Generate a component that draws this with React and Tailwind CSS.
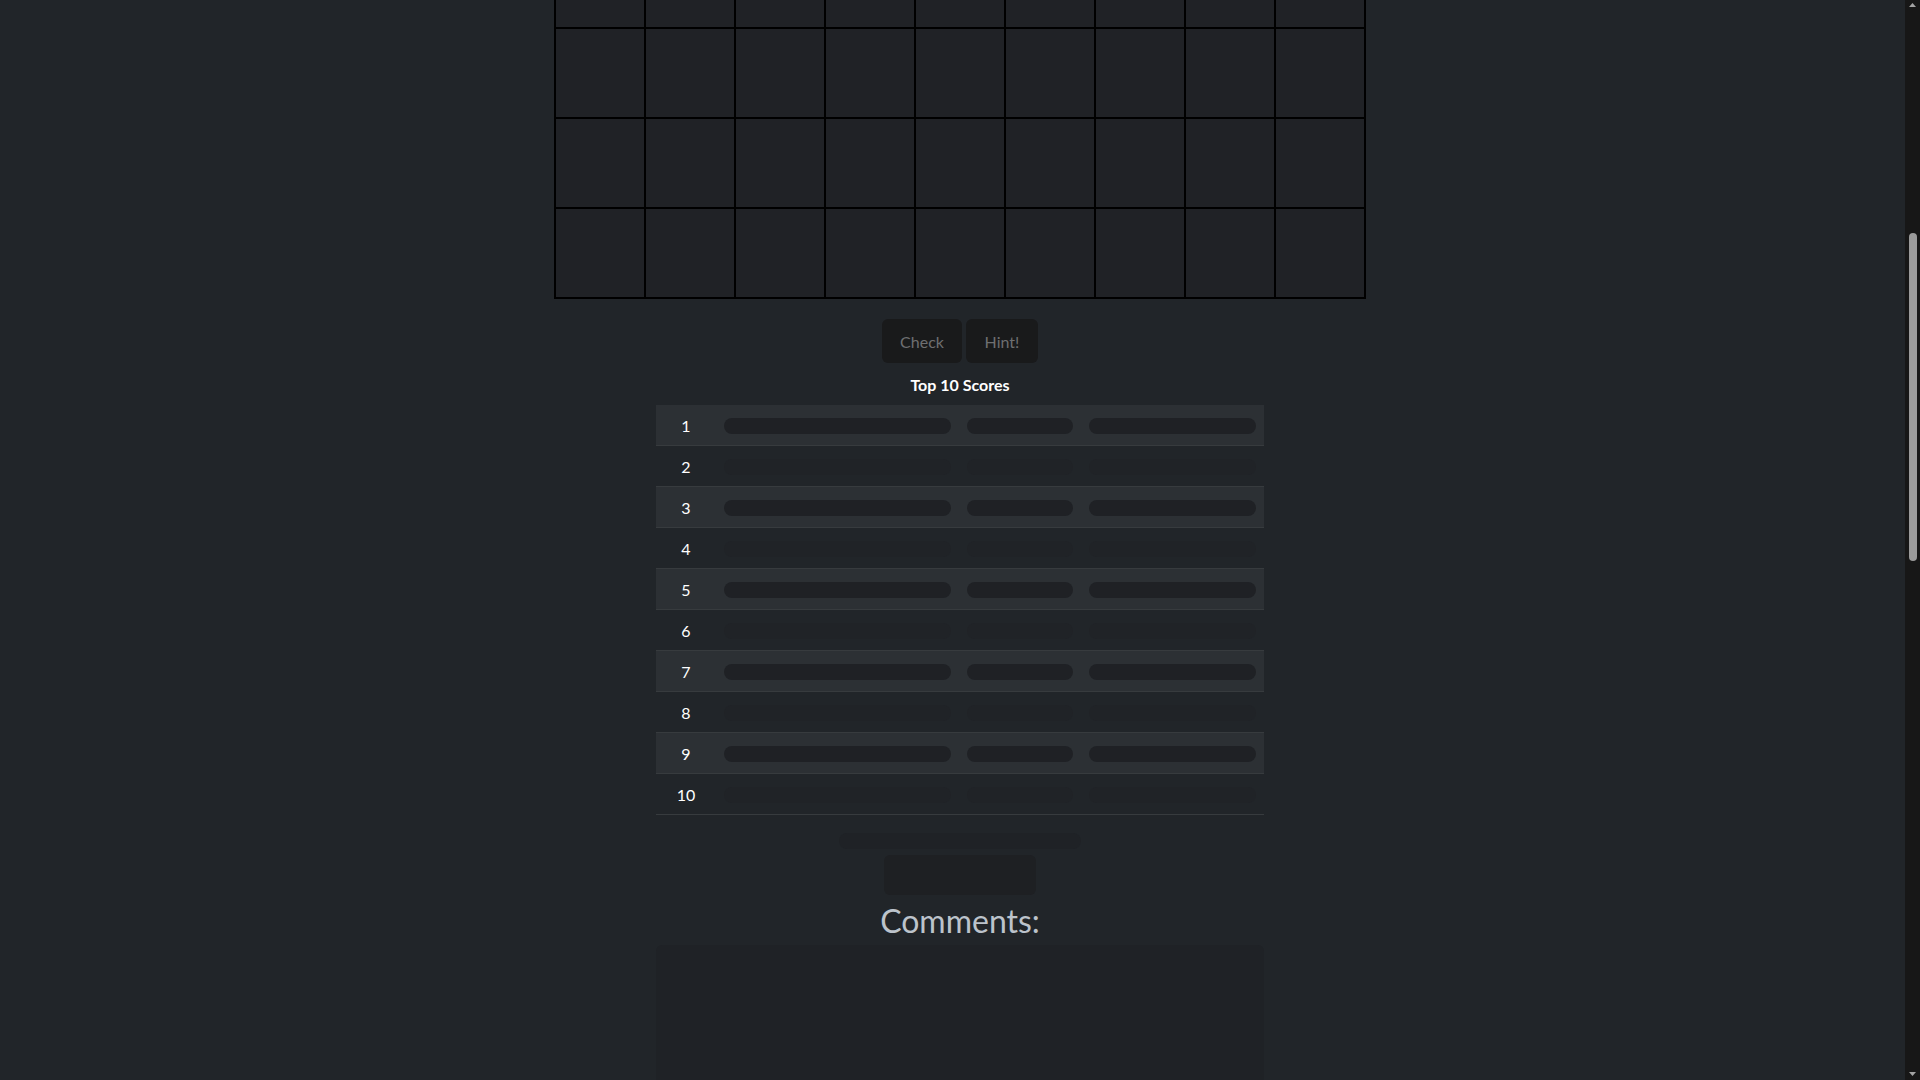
import React from 'react';

const COLS = Array.from({ length: 9 }, (_, i) => i);
// first row is cut by the scroll position, only its lower part shows
const ROW_HEIGHTS = ['h-[28px] border-t-0', 'h-[90px]', 'h-[90px]', 'h-[90px]'];

const Board = () => (
  <div className="border-x border-b border-black">
    {ROW_HEIGHTS.map((rowClass, r) => (
      <div key={r} className="flex">
        {COLS.map((c) => (
          <div key={c} className={`w-[90px] border border-black bg-[#202226] ${rowClass}`} />
        ))}
      </div>
    ))}
  </div>
);

const Placeholder = ({ striped }) => (
  <span
    className={`mt-[-1px] inline-block h-4 w-full rounded-full align-middle ${
      striped ? 'bg-[#1f2125]' : 'bg-[#202327]'
    }`}
  />
);

const ScoreTable = () => (
  <table className="mt-[8px] w-[608px] table-fixed border-collapse text-base leading-6 text-white">
    <colgroup>
      <col className="w-[60px]" />
      <col className="w-[243px]" />
      <col className="w-[122px]" />
      <col className="w-[183px]" />
    </colgroup>
    <tbody>
      {Array.from({ length: 10 }, (_, i) => {
        const striped = i % 2 === 0;
        return (
          <tr key={i} className={`border-b border-[#373b3e] ${striped ? 'bg-[#2c3034]' : ''}`}>
            <td className="px-2 pb-[7px] pt-[9px] text-center">{i + 1}</td>
            <td className="px-2 py-2">
              <Placeholder striped={striped} />
            </td>
            <td className="px-2 py-2">
              <Placeholder striped={striped} />
            </td>
            <td className="px-2 py-2">
              <Placeholder striped={striped} />
            </td>
          </tr>
        );
      })}
    </tbody>
  </table>
);

const Scrollbar = () => (
  <div className="absolute right-0 top-0 flex h-full w-[15px] flex-col items-center bg-[#171717]">
    <svg width="9" height="6" viewBox="0 0 9 6" className="mt-[2px]">
      <path d="M4.5 1 L8 5 L1 5 Z" fill="#a3a3a3" />
    </svg>
    <div className="mt-[225px] h-[328px] w-[8px] rounded-full bg-[#9b9b9b]" />
    <div className="flex-1" />
    <svg width="9" height="6" viewBox="0 0 9 6" className="mb-[3px]">
      <path d="M1 1 L8 1 L4.5 5 Z" fill="#a3a3a3" />
    </svg>
  </div>
);

export default function App() {
  return (
    <div className="relative h-[1080px] overflow-hidden bg-[#212529] font-[Lato,sans-serif] text-[#dee2e6]">
      <main className="flex flex-col items-center">
        <Board />

        <div className="mt-5 flex gap-1">
          <button className="h-[44px] w-[80px] rounded-md bg-[#191a1b] pt-[2px] text-base text-[#6e6f71]">
            Check
          </button>
          <button className="h-[44px] w-[72px] rounded-md bg-[#191a1b] pt-[2px] text-base text-[#6e6f71]">
            Hint!
          </button>
        </div>

        <h5 className="mt-[10px] text-base font-bold leading-6 text-white">Top 10 Scores</h5>

        <ScoreTable />

        {/* loading placeholders for the form below */}
        <span className="mt-[18px] h-4 w-[242px] rounded-full bg-[#1f2226]" />
        <span className="mt-[6px] h-[40px] w-[152px] rounded-md bg-[#1e2023]" />

        <h2 className="mt-[7px] text-[32px] leading-[38px] text-[#bcc3cb]">Comments:</h2>

        <div className="mt-[5px] h-[240px] w-[608px] rounded-md bg-[#1f2226]" />
      </main>

      <Scrollbar />
    </div>
  );
}
